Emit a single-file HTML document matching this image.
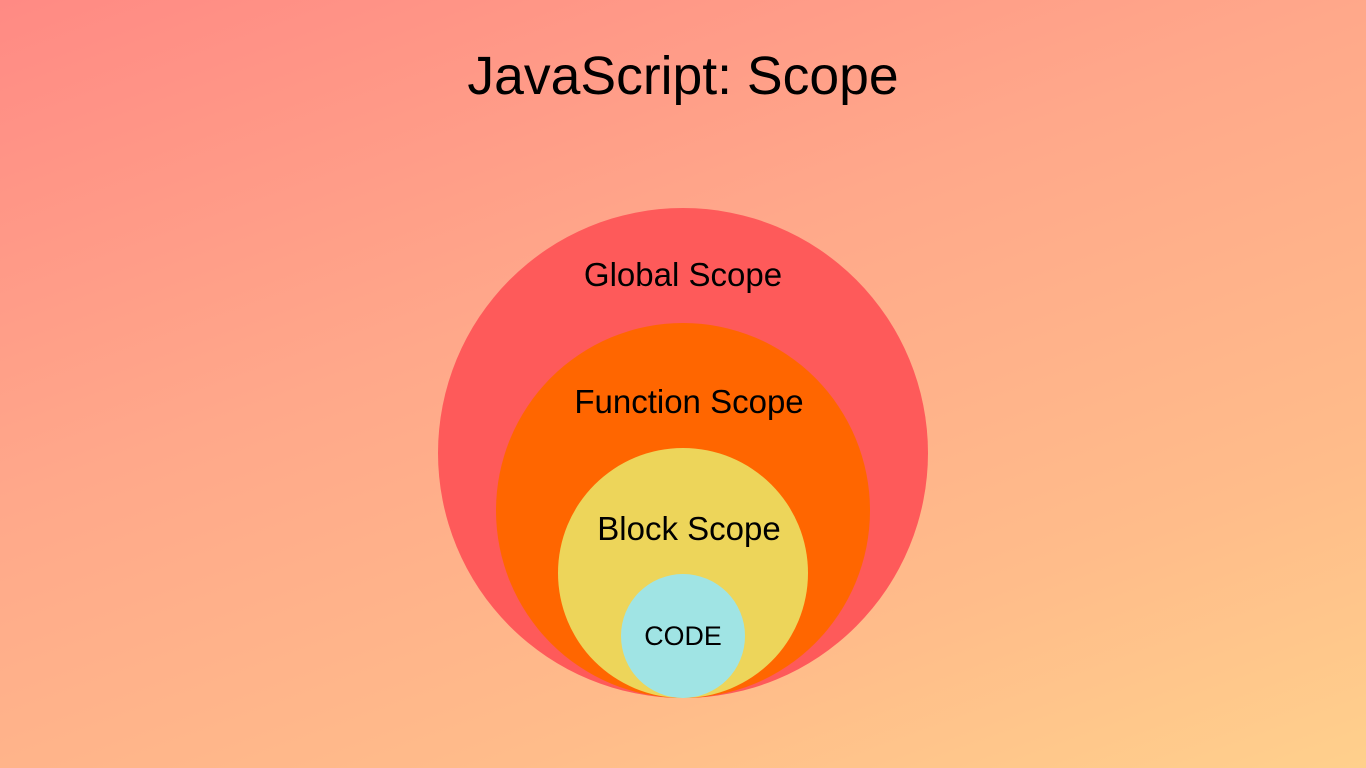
<!DOCTYPE html>
<html><head><style>
html,body{margin:0;padding:0;width:1366px;height:768px;overflow:hidden}
body{background:linear-gradient(160deg,#ff8a84 0%,#ffa88a 40%,#ffbc8a 75%,#ffd08c 100%);font-family:"Liberation Sans",sans-serif;position:relative}
.t{position:absolute;left:0;width:1366px;text-align:center;color:#000}
.c{position:absolute;border-radius:50%}
</style></head><body>
<div class="t" style="top:46px;font-size:53.5px;left:0px">JavaScript: Scope</div>
<div class="c" style="left:438px;top:208px;width:490px;height:490px;background:#fe5a5a"></div>
<div class="c" style="left:496px;top:323px;width:374px;height:375px;background:#ff6600"></div>
<div class="c" style="left:558px;top:448px;width:250px;height:250px;background:#edd55a"></div>
<div class="c" style="left:621px;top:574px;width:124px;height:124px;background:#a0e4e4"></div>
<div class="t" style="top:256px;font-size:33px;left:0">Global Scope</div>
<div class="t" style="top:383px;font-size:33px;left:6px">Function Scope</div>
<div class="t" style="top:510px;font-size:33px;left:6px">Block Scope</div>
<div class="t" style="top:621px;font-size:26.8px;left:0">CODE</div>
</body></html>
